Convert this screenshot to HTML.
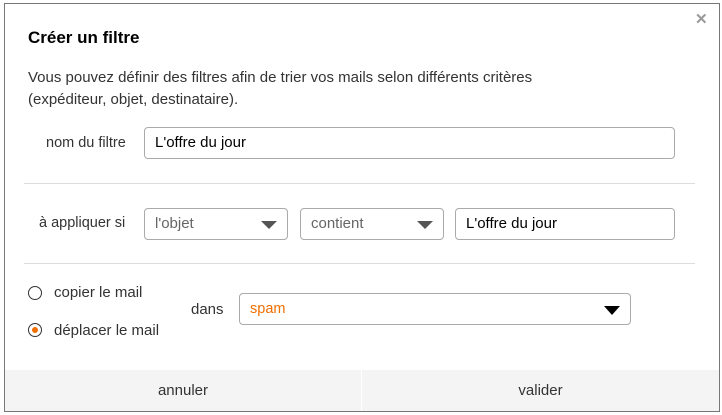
<!DOCTYPE html>
<html><head><meta charset="utf-8"><style>
*{box-sizing:border-box;margin:0;padding:0}
body{width:722px;height:415px;background:#fff;font-family:"Liberation Sans",Arial,sans-serif;position:relative;overflow:hidden;color:#333}
.dlg{position:absolute;left:4px;top:3px;width:716px;height:409px;border:1px solid #777;background:#fff}
.a{position:absolute}
.in{position:absolute;border:1px solid #aaa;border-radius:4px;height:32px;font-size:15px;padding-left:10px;line-height:30px;color:#000}
.sel{color:#666}
.tri{position:absolute;right:10px;top:12px;width:0;height:0;border-left:8px solid transparent;border-right:8px solid transparent;border-top:8px solid #555}
.hr{position:absolute;left:24px;width:671px;height:1px;background:#ddd}
.radio{position:absolute;width:14px;height:14px;border:1px solid #333;border-radius:50%}
.lbl{font-size:15px;color:#333}
</style></head><body>
<div class="dlg"></div>
<div class="a" style="left:695px;top:10px;font-size:15px;color:#999;font-weight:bold">✕</div>
<div class="a" style="left:28px;top:28px;font-size:17px;font-weight:bold;color:#000">Créer un filtre</div>
<div class="a lbl" style="left:28px;top:67px;line-height:22px;font-size:15px">Vous pouvez définir des filtres afin de trier vos mails selon différents critères<br>(expéditeur, objet, destinataire).</div>
<div class="a lbl" style="left:46px;top:135px;font-size:14.5px">nom du filtre</div>
<div class="in" style="left:144px;top:127px;width:531px">L'offre du jour</div>
<div class="hr" style="top:183px"></div>
<div class="a lbl" style="left:39px;top:215px;font-size:14.5px">à appliquer si</div>
<div class="in sel" style="left:144px;top:208px;width:144px">l'objet<div class="tri"></div></div>
<div class="in sel" style="left:300px;top:208px;width:144px">contient<div class="tri"></div></div>
<div class="in" style="left:455px;top:208px;width:220px">L'offre du jour</div>
<div class="hr" style="top:263px"></div>
<div class="radio" style="left:28px;top:286px"></div>
<div class="a lbl" style="left:54px;top:284px">copier le mail</div>
<div class="radio" style="left:28px;top:323px"><div style="position:absolute;left:3px;top:3px;width:6px;height:6px;border-radius:50%;background:#f16e00"></div></div>
<div class="a lbl" style="left:54px;top:322px">déplacer le mail</div>
<div class="a lbl" style="left:191px;top:301px">dans</div>
<div class="in" style="left:239px;top:293px;width:392px;color:#f16e00;font-size:14.5px">spam<div style="position:absolute;right:10px;top:12px;border-left:8px solid transparent;border-right:8px solid transparent;border-top:9px solid #000"></div></div>
<div class="a" style="left:5px;top:370px;width:714px;height:41px;background:#f4f4f4"></div>
<div class="a" style="left:361px;top:370px;width:1px;height:41px;background:#fff"></div>
<div class="a lbl" style="left:5px;top:382px;width:356px;text-align:center">annuler</div>
<div class="a lbl" style="left:362px;top:382px;width:357px;text-align:center">valider</div>
</body></html>
